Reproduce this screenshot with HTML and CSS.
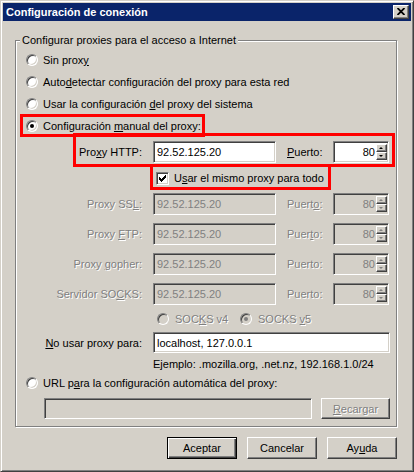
FILE: index.html
```html
<!DOCTYPE html>
<html lang="es">
<head>
    <meta charset="UTF-8">
    <title>Configuración de conexión</title>
    <link rel="stylesheet" href="styles.css">
</head>
<body>
    <div class="window">
        <div class="titlebar">
            <span class="title">Configuración de conexión</span>
            <span class="close-btn">
                <svg width="8" height="7" viewBox="0 0 8 7"><path d="M0.5 0 L7.5 7 M7.5 0 L0.5 7" stroke="#000" stroke-width="1.8"/></svg>
            </span>
        </div>

        <div class="client">
            <fieldset class="group">
                <legend>Configurar proxies para el acceso a Internet</legend>

                <div class="radio-row"><span class="radio"></span><span>Sin prox<u>y</u></span></div>
                <div class="radio-row"><span class="radio"></span><span>Auto<u>d</u>etectar configuración del proxy para esta red</span></div>
                <div class="radio-row"><span class="radio"></span><span>Usar la configuración <u>d</u>el proxy del sistema</span></div>
                <div class="radio-row"><span class="radio checked"></span><span>Configuración <u>m</u>anual del proxy:</span></div>

                <div class="proxy-row http-row">
                    <label class="field-label">Pro<u>x</u>y HTTP:</label>
                    <input class="field" type="text" value="92.52.125.20">
                    <label class="port-label"><u>P</u>uerto:</label>
                    <div class="spin"><span class="spin-value">80</span><span class="spin-btns"><span class="spin-up"></span><span class="spin-down"></span></span></div>
                </div>

                <div class="check-row">
                    <span class="checkbox">
                        <svg width="7" height="7" viewBox="0 0 7 7"><path d="M0 2h1v1h1v1h1V3h1V2h1V1h1V0h1v3H6v1H5v1H4v1H3v1H2V6H1V5H0z" fill="#000"/></svg>
                    </span>
                    <span>U<u>s</u>ar el mismo proxy para todo</span>
                </div>

                <div class="proxy-row disabled">
                    <label class="field-label">Proxy SS<u>L</u>:</label>
                    <input class="field" type="text" value="92.52.125.20" disabled>
                    <label class="port-label">Puert<u>o</u>:</label>
                    <div class="spin"><span class="spin-value">80</span><span class="spin-btns"><span class="spin-up"></span><span class="spin-down"></span></span></div>
                </div>
                <div class="proxy-row disabled">
                    <label class="field-label">Proxy <u>F</u>TP:</label>
                    <input class="field" type="text" value="92.52.125.20" disabled>
                    <label class="port-label">Puer<u>t</u>o:</label>
                    <div class="spin"><span class="spin-value">80</span><span class="spin-btns"><span class="spin-up"></span><span class="spin-down"></span></span></div>
                </div>
                <div class="proxy-row disabled">
                    <label class="field-label">Proxy <u>g</u>opher:</label>
                    <input class="field" type="text" value="92.52.125.20" disabled>
                    <label class="port-label">Puerto:</label>
                    <div class="spin"><span class="spin-value">80</span><span class="spin-btns"><span class="spin-up"></span><span class="spin-down"></span></span></div>
                </div>
                <div class="proxy-row disabled">
                    <label class="field-label">Servidor SO<u>C</u>KS:</label>
                    <input class="field" type="text" value="92.52.125.20" disabled>
                    <label class="port-label">Puerto:</label>
                    <div class="spin"><span class="spin-value">80</span><span class="spin-btns"><span class="spin-up"></span><span class="spin-down"></span></span></div>
                </div>

                <div class="socks-row disabled">
                    <span class="socks-opt"><span class="radio"></span><span>SOC<u>K</u>S v4</span></span>
                    <span class="socks-opt"><span class="radio checked"></span><span>SOCKS <u>v</u>5</span></span>
                </div>

                <div class="noproxy-row">
                    <label class="field-label"><u>N</u>o usar proxy para:</label>
                    <input class="field wide" type="text" value="localhost, 127.0.0.1">
                </div>
                <div class="hint">Ejemplo: .mozilla.org, .net.nz, 192.168.1.0/24</div>

                <div class="radio-row"><span class="radio"></span><span>URL p<u>a</u>ra la configuración automática del proxy:</span></div>
                <div class="url-row">
                    <input class="field url-field" type="text" value="" disabled>
                    <span class="btn disabled-btn"><u>R</u>ecargar</span>
                </div>
            </fieldset>

            <div class="actions">
                <span class="btn default">Aceptar</span>
                <span class="btn">Cancelar</span>
                <span class="btn">Ay<u>u</u>da</span>
            </div>
        </div>

        <!-- red annotation frames -->
        <div class="mark mark-manual"></div>
        <div class="mark mark-http"></div>
        <div class="mark mark-check"></div>
    </div>
</body>
</html>
```

FILE: styles.css
```css
* {
    box-sizing: border-box;
}

body {
    margin: 0;
    background: #d4d0c8;
    font-family: "Liberation Sans", Arial, sans-serif;
    font-size: 11px;
    color: #000;
}

u {
    text-decoration-thickness: 1px;
    text-underline-offset: 1px;
}

.window {
    position: relative;
    width: 414px;
    height: 472px;
    padding: 2px;
    background: #d4d0c8;
    border: 1px solid;
    border-color: #d4d0c8 #404040 #404040 #d4d0c8;
    box-shadow: inset 1px 1px #fff, inset -1px -1px #808080;
}

.titlebar {
    height: 18px;
    background: #0a246a;
    color: #fff;
    display: flex;
    align-items: center;
    justify-content: space-between;
    padding: 0 2px 0 3px;
}

.title {
    font-weight: bold;
}

.close-btn {
    width: 16px;
    height: 14px;
    background: #d4d0c8;
    border: 1px solid;
    border-color: #fff #404040 #404040 #fff;
    box-shadow: inset -1px -1px #808080;
    display: flex;
    align-items: center;
    justify-content: center;
    padding-bottom: 1px;
}

.close-btn svg {
    display: block;
}

.client {
    padding: 13px 14px 0 12px;
}

/* group box */
.group {
    margin: 0;
    padding: 0 0 7px 0;
    border: 1px solid #808080;
    box-shadow: inset 1px 1px #fff, 1px 1px #fff;
    min-inline-size: 0;
}

.group legend {
    margin-left: 4px;
    padding: 0 2px;
    line-height: 13px;
    background: #d4d0c8;
}

.radio-row {
    height: 22px;
    display: flex;
    align-items: center;
    gap: 5px;
    padding-left: 10px;
}

.radio-row:first-of-type {
    margin-top: 2px;
}

.radio {
    position: relative;
    width: 12px;
    height: 12px;
    flex: none;
    border-radius: 50%;
    background: #fff;
    border: 1px solid;
    border-color: #808080 #fff #fff #808080;
    box-shadow: inset 1px 1px #404040, inset -1px -1px #d4d0c8;
}

.radio.checked::after {
    content: "";
    position: absolute;
    left: 3px;
    top: 3px;
    width: 4px;
    height: 4px;
    border-radius: 50%;
    background: #000;
}

/* proxy rows */
.proxy-row {
    height: 30px;
    display: flex;
    align-items: center;
}

.field-label {
    width: 126px;
    flex: none;
    text-align: right;
}

.field {
    height: 22px;
    width: 123px;
    margin-left: 11px;
    padding: 0 3px;
    font: inherit;
    color: #000;
    background: #fff;
    border: 1px solid;
    border-color: #808080 #fff #fff #808080;
    box-shadow: inset 1px 1px #404040, inset -1px -1px #d4d0c8;
    outline: none;
}

.port-label {
    width: 46px;
    margin-left: 11px;
}

.spin {
    width: 56px;
    height: 22px;
    display: flex;
    align-items: center;
    background: #fff;
    border: 1px solid;
    border-color: #808080 #fff #fff #808080;
    box-shadow: inset 1px 1px #404040, inset -1px -1px #d4d0c8;
    padding: 2px 1px 2px 2px;
}

.spin-value {
    flex: 1;
    text-align: right;
    padding-right: 1px;
}

.spin-btns {
    width: 11px;
    height: 100%;
    display: flex;
    flex-direction: column;
}

.spin-up,
.spin-down {
    position: relative;
    flex: 1;
    background: #d4d0c8;
    border: 1px solid;
    border-color: #fff #404040 #404040 #fff;
    box-shadow: inset -1px -1px #808080;
}

.spin-up::after,
.spin-down::after {
    content: "";
    position: absolute;
    left: 2px;
    top: 2px;
    border-left: 2px solid transparent;
    border-right: 2px solid transparent;
}

.spin-up::after {
    border-bottom: 2px solid #000;
}

.spin-down::after {
    border-top: 2px solid #000;
}

.check-row {
    height: 22px;
    display: flex;
    align-items: center;
    gap: 5px;
    padding-left: 140px;
}

.checkbox {
    width: 13px;
    height: 13px;
    flex: none;
    display: flex;
    align-items: center;
    justify-content: center;
    background: #fff;
    border: 1px solid;
    border-color: #808080 #fff #fff #808080;
    box-shadow: inset 1px 1px #404040, inset -1px -1px #d4d0c8;
}

.checkbox svg {
    display: block;
}

/* disabled look */
.disabled .field-label,
.disabled .port-label,
.socks-row.disabled .socks-opt span:last-child,
.disabled-btn {
    color: #808080;
    text-shadow: 1px 1px 0 #fff;
}

.disabled .field,
.disabled .spin,
.url-field {
    background: #d4d0c8;
    color: #808080;
}

.disabled .spin-up::after {
    border-bottom-color: #808080;
}

.disabled .spin-down::after {
    border-top-color: #808080;
}

.socks-row {
    height: 20px;
    display: flex;
    align-items: center;
    padding-left: 141px;
}

.socks-opt {
    display: flex;
    align-items: center;
    gap: 6px;
    width: 83px;
}

.socks-row .radio {
    background: #d4d0c8;
}

.socks-row .radio.checked::after {
    background: #808080;
}

.noproxy-row {
    height: 27px;
    display: flex;
    align-items: center;
}

.field.wide {
    width: 237px;
    height: 21px;
}

.hint {
    height: 16px;
    line-height: 16px;
    padding-left: 137px;
}

.url-row {
    display: flex;
    align-items: center;
    gap: 9px;
    margin-top: 4px;
    padding-left: 28px;
}

.url-field {
    margin-left: 0;
    width: 268px;
    height: 21px;
}

/* buttons */
.btn {
    width: 70px;
    height: 22px;
    display: flex;
    align-items: center;
    justify-content: center;
    background: #d4d0c8;
    border: 1px solid;
    border-color: #fff #404040 #404040 #fff;
    box-shadow: inset -1px -1px #808080;
}

.btn.disabled-btn {
    width: 69px;
    height: 21px;
}

.btn.default {
    border-color: #000;
    box-shadow: inset 1px 1px #fff, inset -1px -1px #404040, inset -2px -2px #808080;
}

.actions {
    display: flex;
    justify-content: flex-end;
    gap: 10px;
    margin-top: 10px;
}

/* red annotation frames */
.mark {
    position: absolute;
    border: 3px solid #f00;
    pointer-events: none;
}

.mark-manual {
    left: 19px;
    top: 113px;
    width: 185px;
    height: 23px;
}

.mark-http {
    left: 72px;
    top: 132px;
    width: 322px;
    height: 34px;
}

.mark-check {
    left: 149px;
    top: 163px;
    width: 181px;
    height: 26px;
}
```
